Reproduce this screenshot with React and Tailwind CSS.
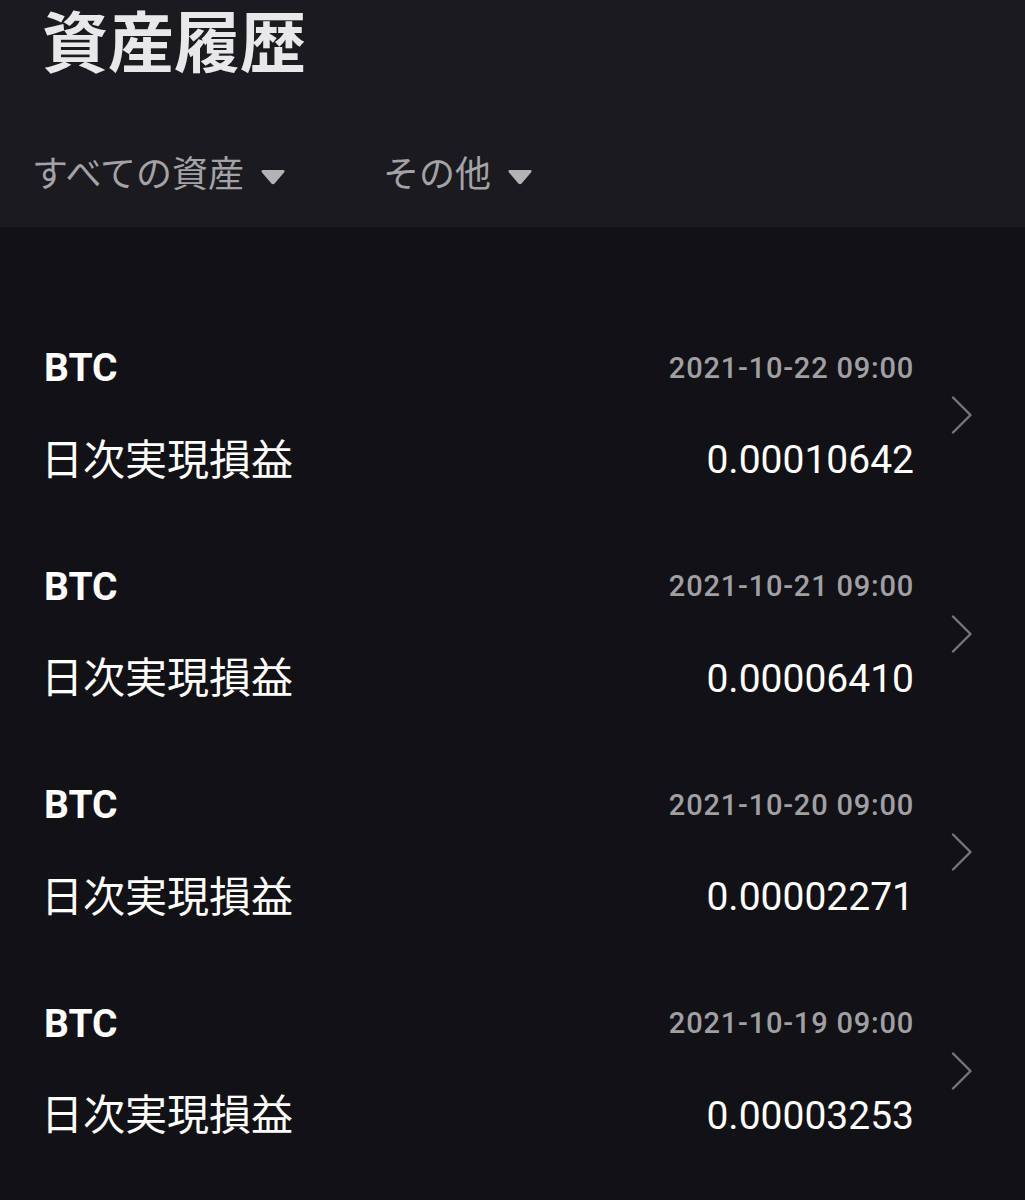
import React from 'react';

const rows = [
  { coin: 'BTC', date: '2021-10-22 09:00', amount: '0.00010642' },
  { coin: 'BTC', date: '2021-10-21 09:00', amount: '0.00006410' },
  { coin: 'BTC', date: '2021-10-20 09:00', amount: '0.00002271' },
  { coin: 'BTC', date: '2021-10-19 09:00', amount: '0.00003253' },
];

const font = { fontFamily: 'Roboto, "Noto Sans CJK JP", sans-serif' };

const Caret = () => (
  <svg width="26" height="16" viewBox="0 0 26 16" className="ml-4 mt-1">
    <path d="M3 1 H23 Q25.5 1 24 3.5 L14.6 14.5 Q13 16 11.4 14.5 L2 3.5 Q0.5 1 3 1 Z" fill="#b3b3b6" />
  </svg>
);

const Chevron = () => (
  <svg width="22" height="38" viewBox="0 0 22 38" fill="none">
    <path d="M2 1.5 L19.5 19 L2 36.5" stroke="#76767b" strokeWidth="2.4" strokeLinecap="round" strokeLinejoin="round" />
  </svg>
);

export default function App() {
  return (
    <div className="w-[1025px] h-[1200px] bg-[#121116] overflow-hidden" style={font}>
      {/* Header */}
      <div className="h-[227px] bg-[#1b1a1f] pl-[44px] pt-[12px]">
        <h1 className="-ml-[2px] text-[66px] leading-[66px] font-bold text-[#e8e8ea]">資産履歴</h1>
        <div className="flex items-center mt-[79px] -ml-[12px] text-[36px] leading-[36px] text-[#a3a3a7]">
          <div className="flex items-center">
            <span>すべての資産</span>
            <Caret />
          </div>
          <div className="flex items-center ml-[97px]">
            <span>その他</span>
            <Caret />
          </div>
        </div>
      </div>

      {/* List */}
      <div className="pt-[79px]">
        {rows.map((r, i) => (
          <div key={i} className="h-[218.5px] flex items-center pl-[44px] pr-[52px]">
            <div className="flex-1">
              <div className="flex items-center justify-between h-[44px]">
                <span className="text-[39px] font-bold text-white">{r.coin}</span>
                <span className="-mr-[2px] text-[29px] font-medium text-[#a0a0a4] tracking-[0.8px]">{r.date}</span>
              </div>
              <div className="flex items-center justify-between h-[48px] mt-[46px]">
                <span className="-ml-[3px] text-[42px] text-white">日次実現損益</span>
                <span className="-mr-[2px] text-[39px] text-white">{r.amount}</span>
              </div>
            </div>
            <div className="ml-[39px]">
              <Chevron />
            </div>
          </div>
        ))}
      </div>
    </div>
  );
}
